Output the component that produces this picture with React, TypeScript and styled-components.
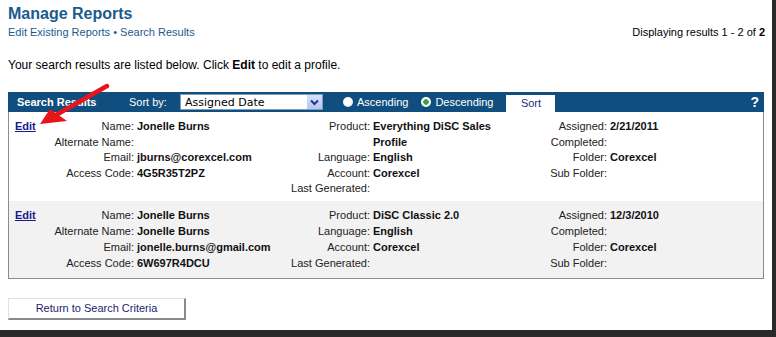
import styled, { createGlobalStyle } from 'styled-components'

const GlobalStyle = createGlobalStyle`
    html, body {
        margin: 0;
        padding: 0;
        background: #2a2a2a;
        font-family: "Liberation Sans", Arial, sans-serif;
    }
`

type Field = { label: string; value?: string }

type Report = {
    people: Field[]
    product: Field[]
    dates: Field[]
}

const reports: Report[] = [
    {
        people: [
            { label: 'Name:', value: 'Jonelle Burns' },
            { label: 'Alternate Name:' },
            { label: 'Email:', value: 'jburns@corexcel.com' },
            { label: 'Access Code:', value: '4G5R35T2PZ' },
        ],
        product: [
            { label: 'Product:', value: 'Everything DiSC Sales Profile' },
            { label: 'Language:', value: 'English' },
            { label: 'Account:', value: 'Corexcel' },
            { label: 'Last Generated:' },
        ],
        dates: [
            { label: 'Assigned:', value: '2/21/2011' },
            { label: 'Completed:' },
            { label: 'Folder:', value: 'Corexcel' },
            { label: 'Sub Folder:' },
        ],
    },
    {
        people: [
            { label: 'Name:', value: 'Jonelle Burns' },
            { label: 'Alternate Name:', value: 'Jonelle Burns' },
            { label: 'Email:', value: 'jonelle.burns@gmail.com' },
            { label: 'Access Code:', value: '6W697R4DCU' },
        ],
        product: [
            { label: 'Product:', value: 'DiSC Classic 2.0' },
            { label: 'Language:', value: 'English' },
            { label: 'Account:', value: 'Corexcel' },
            { label: 'Last Generated:' },
        ],
        dates: [
            { label: 'Assigned:', value: '12/3/2010' },
            { label: 'Completed:' },
            { label: 'Folder:', value: 'Corexcel' },
            { label: 'Sub Folder:' },
        ],
    },
]

function Fields({ items, labelWidth, valueWidth }: { items: Field[]; labelWidth: number; valueWidth?: number }) {
    return (
        <FieldGrid $labelWidth={labelWidth} $valueWidth={valueWidth}>
            {items.map(f => [
                <Label key={f.label + 'l'}>{f.label}</Label>,
                <Value key={f.label + 'v'}>{f.value ?? ''}</Value>,
            ])}
        </FieldGrid>
    )
}

export default function App() {
    return (
        <>
            <GlobalStyle />
            <Window>
                <Title>Manage Reports</Title>
                <SubRow>
                    <Crumbs>Edit Existing Reports • Search Results</Crumbs>
                    <Count>
                        Displaying results 1 - 2 of <b>2</b>
                    </Count>
                </SubRow>
                <Intro>
                    Your search results are listed below. Click <b>Edit</b> to edit a profile.
                </Intro>

                <Panel>
                    <Bar>
                        <BarTitle>Search Results</BarTitle>
                        <SortLabel>Sort by:</SortLabel>
                        <Select>
                            <span>Assigned Date</span>
                            <DropButton>
                                <svg width="9" height="7" viewBox="0 0 9 7">
                                    <path d="M1 1.5 L4.5 5 L8 1.5" fill="none" stroke="#1d3a80" strokeWidth="2" />
                                </svg>
                            </DropButton>
                        </Select>
                        <Radio>
                            <RadioDot />
                            Ascending
                        </Radio>
                        <Radio>
                            <RadioDot $checked />
                            Descending
                        </Radio>
                        <SortButton>Sort</SortButton>
                        <Help>?</Help>
                    </Bar>

                    {reports.map((r, i) => (
                        <Record key={i} $alt={i % 2 === 1} $first={i === 0}>
                            <EditLink>Edit</EditLink>
                            <Fields items={r.people} labelWidth={82} valueWidth={153} />
                            <Fields items={r.product} labelWidth={80} valueWidth={127} />
                            <Fields items={r.dates} labelWidth={107} />
                        </Record>
                    ))}
                </Panel>

                <ReturnButton>Return to Search Criteria</ReturnButton>

                <Arrow width="110" height="50" viewBox="0 0 110 50">
                    <path d="M107 4 L56 33" stroke="#e8141a" strokeWidth="4.5" strokeLinecap="round" />
                    <polygon points="40,42 50,27 67,39" fill="#e8141a" />
                </Arrow>
            </Window>
        </>
    )
}

const Window = styled.div`
    position: relative;
    width: 772px;
    height: 330px;
    box-sizing: border-box;
    background: #ffffff;
    padding: 4px 8px 0 8px;
    display: flex;
    flex-direction: column;
`

const Title = styled.div`
    font-size: 16px;
    font-weight: bold;
    color: #1a5b8f;
    line-height: 20px;
`

const SubRow = styled.div`
    display: flex;
    justify-content: space-between;
    align-items: baseline;
    width: 757px;
    margin-top: 1px;
    font-size: 11px;
    line-height: 14px;
`

const Crumbs = styled.div`
    color: #1a5b8f;
`

const Count = styled.div`
    color: #000;
`

const Intro = styled.div`
    margin-top: 18px;
    font-size: 12px;
    line-height: 16px;
    color: #000;
`

const Panel = styled.div`
    margin-top: 19px;
    width: 756px;
    box-sizing: border-box;
    border: 1px solid #8c8c8c;
    border-top: none;
`

const Bar = styled.div`
    height: 20px;
    background: #0f4e7e;
    display: flex;
    align-items: center;
    padding-left: 9px;
    color: #fff;
    font-size: 11px;
    margin: 0 -1px;
`

const BarTitle = styled.span`
    font-weight: bold;
    width: 112px;
`

const SortLabel = styled.span`
    width: 51px;
`

const Select = styled.div`
    width: 143px;
    height: 16px;
    box-sizing: border-box;
    background: #fff;
    border: 1px solid #7f9db9;
    display: flex;
    align-items: center;
    justify-content: space-between;
    color: #000;
    font-family: "DejaVu Sans", Verdana, sans-serif;
    font-size: 11px;
    padding-left: 4px;
    margin-right: 20px;
`

const DropButton = styled.span`
    width: 15px;
    height: 14px;
    background: linear-gradient(#d6e2fb, #b3c6f1);
    display: flex;
    align-items: center;
    justify-content: center;
`

const Radio = styled.span`
    display: flex;
    align-items: center;
    gap: 4px;
    margin-right: 13px;
`

const RadioDot = styled.span<{ $checked?: boolean }>`
    width: 10px;
    height: 10px;
    border-radius: 50%;
    box-sizing: border-box;
    background: ${p =>
        p.$checked
            ? 'radial-gradient(circle, #3aa23a 0 2.5px, #ffffff 3px)'
            : 'radial-gradient(circle at 40% 40%, #ffffff 40%, #d8d8d8)'};
`

const SortButton = styled.span`
    width: 49px;
    height: 17px;
    margin-top: 2px;
    background: #fff;
    color: #1b2f7a;
    display: flex;
    align-items: center;
    justify-content: center;
    font-size: 11px;
`

const Help = styled.span`
    margin-left: auto;
    margin-right: 5px;
    font-size: 14px;
    font-weight: bold;
`

const Record = styled.div<{ $alt: boolean; $first: boolean }>`
    display: flex;
    align-items: flex-start;
    background: ${p => (p.$alt ? '#f2f2f2' : '#ffffff')};
    padding: ${p => (p.$first ? '7px 0 4px 6px' : '6px 0 7px 6px')};
    line-height: ${p => (p.$first ? '15.5px' : '16px')};
`

const EditLink = styled.a`
    width: 37px;
    color: #1a1a8c;
    font-size: 11px;
    font-weight: bold;
    text-decoration: underline;
`

const FieldGrid = styled.div<{ $labelWidth: number; $valueWidth?: number }>`
    display: grid;
    grid-template-columns: ${p => p.$labelWidth}px ${p => (p.$valueWidth ? p.$valueWidth + 'px' : '1fr')};
    column-gap: 3px;
    font-size: 11px;
    flex: ${p => (p.$valueWidth ? 'none' : '1')};
`

const Label = styled.span`
    text-align: right;
    color: #222;
`

const Value = styled.span`
    font-weight: bold;
    color: #111;
`

const ReturnButton = styled.button`
    margin-top: 19px;
    width: 178px;
    height: 22px;
    background: #fff;
    border: 1px solid #e2e2e2;
    border-right: 2px solid #8a8a8a;
    border-bottom: 2px solid #8a8a8a;
    color: #1c1c6e;
    font-family: "Liberation Sans", Arial, sans-serif;
    font-size: 11px;
    padding: 0;
`

const Arrow = styled.svg`
    position: absolute;
    left: 0;
    top: 82px;
`
